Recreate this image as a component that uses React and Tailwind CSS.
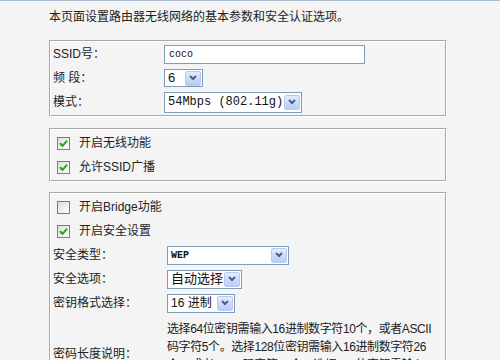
import React from "react";

const F = "font-['Liberation_Sans','Noto_Sans_CJK_SC',sans-serif]";

function Chevron() {
  return (
    <div className="w-[16px] h-[15px] mr-[1px] rounded-[2px] border border-[#b9c9ef] bg-[linear-gradient(180deg,#e3ebfd,#b9cbf6)] flex items-center justify-center shrink-0">
      <svg width="10" height="8" viewBox="0 0 10 8">
        <polyline points="2,2 5,5 8,2" fill="none" stroke="#4a5f8a" strokeWidth="2" />
      </svg>
    </div>
  );
}

function Select({ w, h, children, textCls = "" }) {
  return (
    <div className={`${w} ${h} flex items-center border border-[#7f9db9] bg-white`}>
      <span className={`flex-1 pl-[3px] whitespace-nowrap text-[#111] ${textCls}`}>{children}</span>
      <Chevron />
    </div>
  );
}

function Check({ checked }) {
  return (
    <span className="w-[13px] h-[13px] border border-[#6b8091] bg-[linear-gradient(135deg,#dcdcd7,#ffffff)] flex items-center justify-center shrink-0">
      {checked && (
        <svg width="9" height="9" viewBox="0 0 9 9">
          <path d="M1 4.2 L3.5 6.8 L8 1.8" fill="none" stroke="#21a121" strokeWidth="2" />
        </svg>
      )}
    </span>
  );
}

function Box({ className = "", children }) {
  return (
    <div className="w-[398px] border border-t-[#a8a8a8] border-l-[#a8a8a8] border-b-white border-r-white">
      <div className={`border border-t-white border-l-white border-b-[#a8a8a8] border-r-[#a8a8a8] ${className}`}>
        {children}
      </div>
    </div>
  );
}

function Row({ label, lw, children }) {
  return (
    <div className="h-6 flex items-center">
      <div className={`${lw} pl-[2px] text-[12px] text-[#222]`}>{label}</div>
      {children}
    </div>
  );
}

function CheckRow({ checked, label }) {
  return (
    <div className="h-6 flex items-center pl-[6px] gap-[9px]">
      <Check checked={checked} />
      <span className="text-[12px] text-[#222]">{label}</span>
    </div>
  );
}

export default function App() {
  return (
    <div className={`w-[500px] h-[360px] overflow-hidden bg-[#f4f4f4] border-t border-[#a9bcd3] ${F}`}>
      <div className="pl-[49px]">
        <div className="pt-[9px] h-[39px] text-[12px] leading-[14px] text-[#222]">
          本页面设置路由器无线网络的基本参数和安全认证选项。
        </div>

        <Box className="pb-[1px]">
          <Row label="SSID号：" lw="w-[113px]">
            <div className="w-[201px] h-[19px] border border-[#7f9db9] bg-white flex items-center pl-[4px] text-[10px] text-[#111] font-['Liberation_Mono',monospace]">
              coco
            </div>
          </Row>
          <Row label="频 段：" lw="w-[113px]">
            <Select w="w-[39px]" h="h-[18px]" textCls="text-[13px]">6</Select>
          </Row>
          <Row label="模式：" lw="w-[113px]">
            <Select w="w-[138px]" h="h-[21px]" textCls="text-[12px] font-['Liberation_Mono',monospace]">
              54Mbps (802.11g)
            </Select>
          </Row>
        </Box>

        <div className="h-[11px]" />

        <Box className="pt-[1px] pb-[1px]">
          <CheckRow checked label="开启无线功能" />
          <CheckRow checked label="允许SSID广播" />
        </Box>

        <div className="h-[10px]" />

        <Box className="pt-[1px] pb-[40px]">
          <CheckRow checked={false} label="开启Bridge功能" />
          <CheckRow checked label="开启安全设置" />
          <Row label="安全类型：" lw="w-[116px]">
            <Select w="w-[122px]" h="h-[19px]" textCls="text-[10px] font-bold font-['Liberation_Mono',monospace]">WEP</Select>
          </Row>
          <Row label="安全选项：" lw="w-[116px]">
            <Select w="w-[75px]" h="h-[19px]" textCls="text-[13px]">自动选择</Select>
          </Row>
          <Row label="密钥格式选择：" lw="w-[116px]">
            <Select w="w-[68px]" h="h-[19px]" textCls="text-[12px]">16 进制</Select>
          </Row>
          <div className="flex items-center">
            <div className="w-[116px] pl-[2px] text-[12px] text-[#222]">密码长度说明：</div>
            <div className="pt-[5px] text-[12px] leading-[18px] text-[#222] whitespace-nowrap tracking-[-0.4px]">
              选择64位密钥需输入16进制数字符10个，或者ASCII<br />
              码字符5个。选择128位密钥需输入16进制数字符26<br />
              个，或者ASCII码字符13个。选择152位密钥需输入16<br />
              进制数字符32个，或者ASCII码字符16个。
            </div>
          </div>
        </Box>
      </div>
    </div>
  );
}
